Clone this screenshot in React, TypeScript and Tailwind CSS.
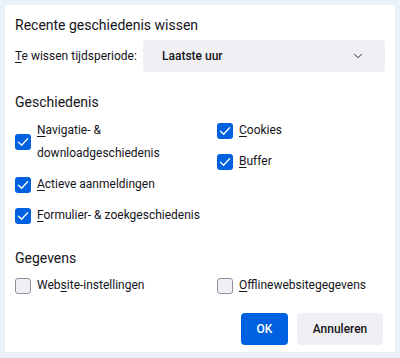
import { ChevronDown } from 'lucide-react'

interface CheckProps {
  checked?: boolean
  label: React.ReactNode
}

function Check({ checked = false, label }: CheckProps) {
  return (
    <div className="flex items-center gap-[6px]">
      {checked ? (
        <div className="flex h-4 w-4 shrink-0 items-center justify-center rounded-[3px] bg-[#0061e0]">
          <svg width="12" height="12" viewBox="0 0 12 12" fill="none">
            <path d="M1.5 6.2 L4.6 9.2 L10.6 2.8" stroke="white" strokeWidth="1.3" strokeLinecap="round" strokeLinejoin="round" />
          </svg>
        </div>
      ) : (
        <div className="h-4 w-4 shrink-0 rounded-[3px] border border-[#8f8f9d] bg-[#f0f0f4]" />
      )}
      <div className="whitespace-nowrap text-[12px] leading-[23px] text-[#15141a]">{label}</div>
    </div>
  )
}

function U({ children }: { children: React.ReactNode }) {
  return <span className="underline underline-offset-2">{children}</span>
}

export default function App() {
  return (
    <div
      className="h-[358px] w-[400px] bg-[#e9f1f9] p-[5px]"
      style={{ fontFamily: 'Roboto, "Liberation Sans", sans-serif' }}
    >
      <div className="flex h-[347px] w-[390px] flex-col bg-white px-[10px] pt-[9px] text-[#15141a]">
        <div className="text-[14px] leading-[22px]">Recente geschiedenis wissen</div>

        <div className="mt-[4px] flex items-center">
          <div className="w-[128px] whitespace-nowrap text-[12px]">
            <U>T</U>e wissen tijdsperiode:
          </div>
          <div className="flex h-[32px] flex-1 items-center justify-between rounded-[4px] bg-[#f0f0f4] pl-[19px] pr-[20px] text-[12px] font-medium">
            <span>Laatste uur</span>
            <ChevronDown size={14} strokeWidth={1.5} />
          </div>
        </div>

        <div className="mt-[19px] text-[14px] leading-[22px]">Geschiedenis</div>
        <div className="mt-[6px] grid grid-cols-[202px_1fr]">
          <div className="flex flex-col gap-[8px]">
            <Check
              checked
              label={
                <>
                  <U>N</U>avigatie- &amp;
                  <br />
                  downloadgeschiedenis
                </>
              }
            />
            <Check checked label={<><U>A</U>ctieve aanmeldingen</>} />
            <Check checked label={<><U>F</U>ormulier- &amp; zoekgeschiedenis</>} />
          </div>
          <div className="flex flex-col gap-[8px]">
            <Check checked label={<><U>C</U>ookies</>} />
            <Check checked label={<><U>B</U>uffer</>} />
          </div>
        </div>

        <div className="mt-[20px] text-[14px] leading-[22px]">Gegevens</div>
        <div className="mt-[5px] grid grid-cols-[202px_1fr]">
          <Check label={<>Web<U>s</U>ite-instellingen</>} />
          <Check label={<><U>O</U>fflinewebsitegegevens</>} />
        </div>

        <div className="mt-auto mb-[7px] flex justify-end gap-[9px] pr-[2px]">
          <button className="h-[32px] w-[47px] rounded-[4px] bg-[#0061e0] text-[12px] font-medium text-white">
            OK
          </button>
          <button className="h-[32px] w-[86px] rounded-[4px] bg-[#f0f0f4] text-[12px] font-medium text-[#15141a]">
            Annuleren
          </button>
        </div>
      </div>
    </div>
  )
}
